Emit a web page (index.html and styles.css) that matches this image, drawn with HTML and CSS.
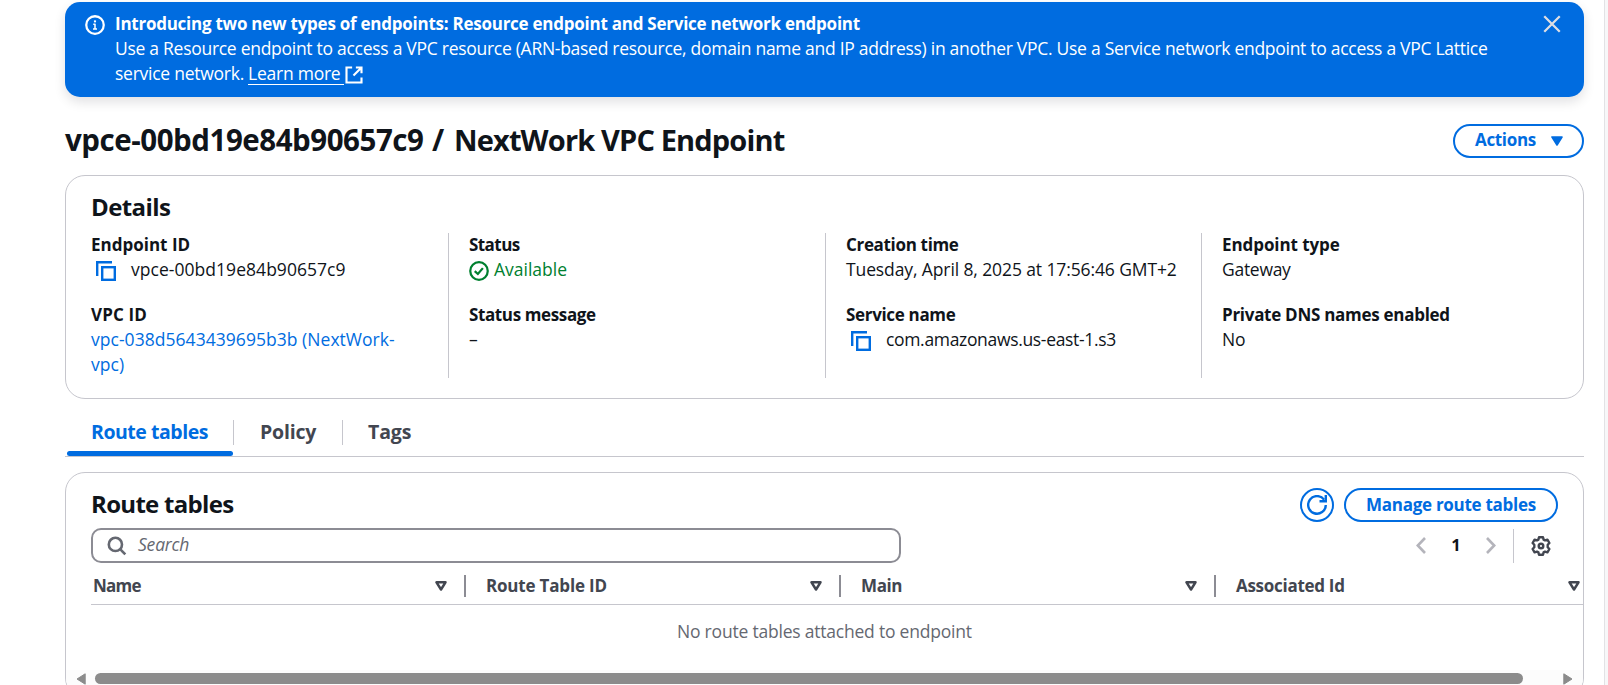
FILE: index.html
```
<!DOCTYPE html>
<html lang="en">
<head>
<meta charset="utf-8">
<title>VPC Endpoint</title>
<link rel="stylesheet" href="styles.css">
</head>
<body>
<main class="page">
  <section class="banner">
    <svg class="banner-icon" width="20" height="20" viewBox="0 0 16 16" fill="none" stroke="#fff" stroke-width="1.8"><circle cx="8" cy="8" r="7"/><path d="M8 11.4V7.1M6.6 7.4H8.4M6.4 11.2H9.6" stroke-width="1.2"/><path d="M8 4.3V5.9" stroke-width="1.7"/></svg>
    <div class="banner-text">
      <div class="bold ls-25">Introducing two new types of endpoints: Resource endpoint and Service network endpoint</div>
      <div class="ls-28">Use a Resource endpoint to access a VPC resource (ARN-based resource, domain name and IP address) in another VPC. Use a Service network endpoint to access a VPC Lattice</div>
      <div class="banner-last ls-25"><span>service network.</span><a class="learn">Learn more</a><svg width="20" height="20" viewBox="0 0 16 16" fill="none" stroke="#fff" stroke-width="1.7"><path d="M6.500 2H2v12h12v-4M9.500 2H14v4.500M14 2L7.600 8.400"/></svg></div>
    </div>
    <svg class="banner-close" width="20" height="20" viewBox="0 0 16 16" fill="none" stroke="#dedee3" stroke-width="1.8"><path d="M1.8 1.8l12.4 12.4M14.2 1.8L1.8 14.2"/></svg>
  </section>

  <header class="title-row">
    <h1>vpce-00bd19e84b90657c9<span class="slash"> / </span><span class="title-name">NextWork VPC Endpoint</span></h1>
    <button class="btn actions"><span class="ls-33">Actions</span><svg width="12" height="10" viewBox="0 0 12 10"><path d="M1 1h10L6 9z" fill="#006ce0" stroke="#006ce0" stroke-width="1.6" stroke-linejoin="round"/></svg></button>
  </header>

  <section class="card details">
    <h2>Details</h2>
    <div class="cols">
      <div class="col">
        <div class="field"><div class="label">Endpoint ID</div><div class="copyable"><svg width="20" height="20" viewBox="0 0 20 20" fill="none" stroke="#006ce0" stroke-width="2.4"><path d="M1.200 15V1.200H16"/><rect x="6.200" y="6.200" width="12.600" height="12.600"/></svg><span class="ls04">vpce-00bd19e84b90657c9</span></div></div>
        <div class="field"><div class="label ls15">VPC ID</div><a class="link ls04">vpc-038d5643439695b3b (NextWork-<br>vpc)</a></div>
      </div>
      <div class="col">
        <div class="field"><div class="label ls-56">Status</div><div class="status"><svg width="20" height="20" viewBox="0 0 16 16" fill="none" stroke="#00802f" stroke-width="1.800"><circle cx="8" cy="8" r="7"/><path d="M4.600 8.100l2.500 2.300 4-4.700"/></svg><span>Available</span></div></div>
        <div class="field"><div class="label ls-38">Status message</div><div>–</div></div>
      </div>
      <div class="col">
        <div class="field"><div class="label ls-33">Creation time</div><div class="ls-11">Tuesday, April 8, 2025 at 17:56:46 GMT+2</div></div>
        <div class="field"><div class="label ls-33">Service name</div><div class="copyable"><svg width="20" height="20" viewBox="0 0 20 20" fill="none" stroke="#006ce0" stroke-width="2.4"><path d="M1.200 15V1.200H16"/><rect x="6.200" y="6.200" width="12.600" height="12.600"/></svg><span class="ls-33">com.amazonaws.us-east-1.s3</span></div></div>
      </div>
      <div class="col">
        <div class="field"><div class="label ls-06">Endpoint type</div><div class="ls-28">Gateway</div></div>
        <div class="field"><div class="label ls-28">Private DNS names enabled</div><div class="ls-19">No</div></div>
      </div>
    </div>
  </section>

  <nav class="tabs">
    <a class="tab active">Route tables</a>
    <a class="tab policy ls-19">Policy</a>
    <a class="tab tags ls-11">Tags</a>
  </nav>

  <section class="card routes">
    <div class="routes-head">
      <h2 class="ls-63">Route tables</h2>
      <button class="btn round"><svg width="20" height="20" viewBox="0 0 20 20" fill="none" stroke="#006ce0" stroke-width="2.4"><path d="M18.800 10a8.800 8.800 0 1 1-1.700-5.300"/><path d="M12.500 6.200H18.800V0"/></svg></button>
      <button class="btn manage ls-28">Manage route tables</button>
    </div>
    <div class="tools">
      <div class="search"><svg width="20" height="20" viewBox="0 0 20 20" fill="none" stroke="#656871" stroke-width="2.600"><circle cx="8.400" cy="8.400" r="6.600"/><path d="M13.100 13.100l5.200 5.200"/></svg><span>Search</span></div>
      <div class="pager">
        <svg width="10" height="17" viewBox="0 0 10 17" fill="none" stroke="#b4b4bb" stroke-width="2.6"><path d="M9 1L1.800 8.500L9 16"/></svg>
        <span class="num">1</span>
        <svg width="10" height="17" viewBox="0 0 10 17" fill="none" stroke="#b4b4bb" stroke-width="2.6"><path d="M1 1l7.200 7.500L1 16"/></svg>
        <i class="vline"></i>
        <svg width="20" height="20" viewBox="0 0 20 20" fill="none" stroke="#424650" stroke-width="2.400" stroke-linejoin="round"><path d="M8 1.300h4l.6 2.300 1.400.8 2.400-.8 2 3.400-1.700 1.800v2.400l1.700 1.800-2 3.400-2.400-.8-1.400.8-.6 2.300H8l-.6-2.300-1.400-.8-2.400.8-2-3.400 1.700-1.800V8.800L1.600 7l2-3.400 2.400.8 1.400-.8z"/><circle cx="10" cy="10" r="2.300"/></svg>
      </div>
    </div>
    <div class="thead">
      <div class="th name"><span class="ls-80">Name</span><svg width="12" height="10" viewBox="0 0 12 10"><path d="M1.500 1.300h9L6 8.500z" fill="none" stroke="#424650" stroke-width="2.500" stroke-linejoin="round"/></svg></div>
      <div class="th"><span class="ls-19">Route Table ID</span><svg width="12" height="10" viewBox="0 0 12 10"><path d="M1.500 1.300h9L6 8.500z" fill="none" stroke="#424650" stroke-width="2.500" stroke-linejoin="round"/></svg></div>
      <div class="th"><span class="ls-38">Main</span><svg width="12" height="10" viewBox="0 0 12 10"><path d="M1.500 1.300h9L6 8.500z" fill="none" stroke="#424650" stroke-width="2.500" stroke-linejoin="round"/></svg></div>
      <div class="th last"><span class="ls-28">Associated Id</span><svg width="12" height="10" viewBox="0 0 12 10"><path d="M1.500 1.300h9L6 8.500z" fill="none" stroke="#424650" stroke-width="2.500" stroke-linejoin="round"/></svg></div>
    </div>
    <div class="empty ls-21">No route tables attached to endpoint</div>
    <div class="scroll">
      <svg width="10" height="12" viewBox="0 0 10 12"><path d="M9.200 .8v10.400L1 6z" fill="#8b8b8b" stroke="#8b8b8b" stroke-linejoin="round"/></svg>
      <i class="thumb"></i>
      <svg class="right" width="10" height="12" viewBox="0 0 10 12"><path d="M.8 .8v10.400L9 6z" fill="#8b8b8b" stroke="#8b8b8b" stroke-linejoin="round"/></svg>
    </div>
  </section>
</main>
<aside class="edge"></aside>
</body>
</html>
```
FILE: styles.css
```
* { box-sizing: border-box; }
body {
  margin: 0;
  height: 685px;
  overflow: hidden;
  display: flex;
  background: #fff;
  color: #0f141a;
  font: 17.5px/25px "Open Sans", "Noto Sans", sans-serif;
  white-space: nowrap;
}
svg { display: block; flex: none; }
h1, h2 { margin: 0; font-weight: 700; }
h1 { font-size: 29.5px; line-height: 38px; letter-spacing: -.46px; }
.slash { letter-spacing: 1px; }
.title-name { font-size: 29px; letter-spacing: -.85px; }
h2 { font-size: 24px; line-height: 30px; letter-spacing: -.6px; }
.bold, .label { font-size: 17px; font-weight: 700; }
.ls15 { letter-spacing: .15px; }
.ls04 { letter-spacing: .04px; }
.ls-06 { letter-spacing: -.08px; }
.ls-11 { letter-spacing: -.11px; }
.ls-19 { letter-spacing: -.19px; }
.ls-21 { letter-spacing: -.21px; }
.ls-25 { letter-spacing: -.25px; }
.ls-28 { letter-spacing: -.28px; }
.ls-33 { letter-spacing: -.33px; }
.ls-38 { letter-spacing: -.38px; }
.ls-56 { letter-spacing: -.56px; }
.ls-63 { letter-spacing: -.7px; }
.ls-80 { letter-spacing: -.8px; }

.page { width: 1604px; padding: 2px 20px 0 65px; flex: none; }
.edge { width: 4px; background: #f7f7f8; border-left: 1px solid #e2e2e5; }

.banner {
  height: 95px;
  border-radius: 15px;
  background: #006ce0;
  color: #fff;
  display: flex;
  padding: 9px 22px 0 20px;
  box-shadow: 0 5px 12px rgba(0, 7, 22, .12);
}
.banner-icon { margin: 4px 10px 0 0; }
.banner-text { flex: 1; }
.banner-last { display: flex; }
.learn { margin: 0 0 0 4px; padding-right: 4px; height: 24px; border-bottom: 1px solid #fff; }
.banner-last svg { margin: 4px 0 0 0; }
.banner-close { margin-top: 3px; }

.title-row { display: flex; justify-content: space-between; height: 78px; padding-top: 24px; }
.btn {
  height: 34px;
  border: 2px solid #006ce0;
  border-radius: 17px;
  background: #fff;
  color: #006ce0;
  font: 700 17px/26px "Open Sans", "Noto Sans", sans-serif;
  padding: 0 20px;
  display: flex;
  align-items: center;
  justify-content: center;
}
.actions { width: 131px; margin-top: 3px; justify-content: space-between; padding: 0 19px 0 20px; }
.actions span { padding-bottom: 2px; }

.card { border: 1px solid #c6c6cd; border-radius: 20px; background: #fff; }
.details { height: 224px; padding: 16px 25px 0; }
.cols { display: grid; grid-template-columns: 357px 377px 376px 1fr; margin-top: 11px; height: 145px; }
.col { border-left: 1px solid #c6c6cd; padding-left: 20px; }
.col:first-child { border-left: 0; padding-left: 0; }
.field { height: 70px; margin-top: -1px; }
.field + .field { margin-top: 0; }
.copyable { display: flex; padding-left: 5px; }
.copyable svg, .status svg { margin-top: 4px; }
.copyable svg { margin-right: 15px; }
.link { color: #006ce0; }
.status { display: flex; color: #00802f; }
.status svg { margin-right: 5px; }

.tabs { display: flex; height: 58px; border-bottom: 1px solid #c6c6cd; }
.tab {
  font-size: 19.5px;
  line-height: 23px;
  font-weight: 700;
  color: #424650;
  height: 25px;
  margin-top: 21px;
  border-left: 1px solid #c6c6cd;
}
.active {
  color: #006ce0;
  width: 166px;
  margin-left: 2px;
  padding: 0 0 0 24px;
  height: 36px;
  border: 0;
  position: relative;
  letter-spacing: -.47px;
}
.active::after {
  content: "";
  position: absolute;
  inset: auto 0 0 0;
  height: 5px;
  border-radius: 2.5px;
  background: #006ce0;
}
.policy { width: 109px; padding-left: 26px; }
.tags { padding-left: 25px; }

.routes { height: 226px; margin-top: 15px; padding: 15px 0 0 25px; overflow: hidden; }
.routes-head { display: flex; height: 40px; padding-right: 25px; }
.routes-head h2 { flex: 1; padding-top: 1px; }
.round { width: 34px; padding: 0; margin-right: 10px; }
.manage { width: 214px; padding: 0 0 1px; }
.tools { display: flex; justify-content: space-between; padding-right: 32px; }
.search {
  width: 810px;
  height: 35px;
  border: 2px solid #8c8c94;
  border-radius: 10px;
  display: flex;
  padding: 2px 0 0 14px;
  color: #656871;
  font-style: italic;
  letter-spacing: -.2px;
}
.search svg { margin: 4px 11px 0 0; }
.pager { display: flex; align-items: center; height: 35px; }
.num { width: 60px; text-align: center; font-weight: 700; font-size: 16.5px; padding-bottom: 2px; }
.vline { width: 1px; height: 34px; background: #c6c6cd; margin: 0 17px 0 17px; }

.thead {
  display: flex;
  height: 42px;
  border-bottom: 1px solid #c6c6cd;
  color: #424650;
  font-size: 17px;
  font-weight: 700;
  padding-top: 12px;
}
.th {
  width: 375px;
  height: 22px;
  line-height: 22px;
  border-right: 2px solid #8c8c94;
  display: flex;
  justify-content: space-between;
  align-items: center;
  padding: 0 17px 0 20px;
}
.th span { padding-bottom: 1px; }
.name { padding-left: 2px; }
.last { flex: 1; border: 0; padding-right: 3px; }
.empty { height: 65px; padding: 14px 0 0 586px; color: #656871; }
.scroll { height: 21px; margin-left: -25px; padding: 3px 10px 0; background: #fcfcfc; display: flex; }
.thumb { width: 1428px; height: 11px; border-radius: 6px; background: #8b8b8b; margin-left: 9px; }
.right { margin-left: auto; }
```
